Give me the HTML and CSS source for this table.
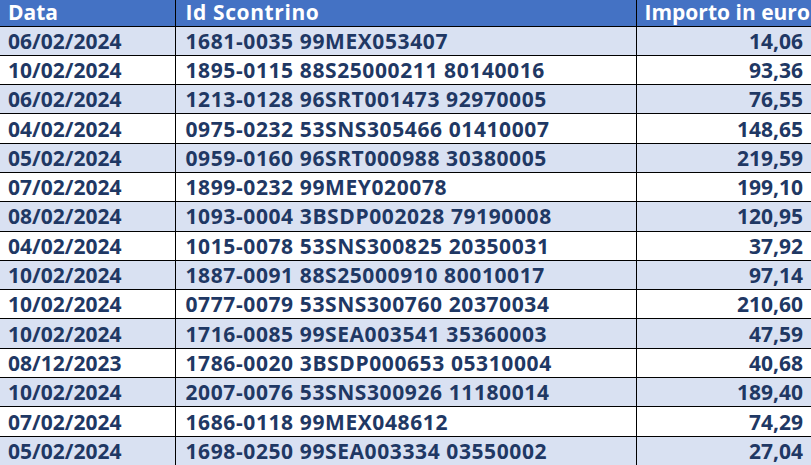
FILE: index.html
```html
<!DOCTYPE html>
<html lang="it">
<head>
<meta charset="utf-8">
<title>Scontrini</title>
<link rel="stylesheet" href="styles.css">
</head>
<body>
<table class="receipts">
  <thead>
    <tr class="head"><th class="c-date">Data</th><th class="c-id">Id Scontrino</th><th class="c-amt">Importo in euro</th></tr>
  </thead>
  <tbody>
    <tr class="alt"><td>06/02/2024</td><td class="id">1681-0035 99MEX053407</td><td class="num">14,06</td></tr>
    <tr><td>10/02/2024</td><td class="id">1895-0115 88S25000211 80140016</td><td class="num">93,36</td></tr>
    <tr class="alt"><td>06/02/2024</td><td class="id">1213-0128 96SRT001473 92970005</td><td class="num">76,55</td></tr>
    <tr><td>04/02/2024</td><td class="id">0975-0232 53SNS305466 01410007</td><td class="num">148,65</td></tr>
    <tr class="alt"><td>05/02/2024</td><td class="id">0959-0160 96SRT000988 30380005</td><td class="num">219,59</td></tr>
    <tr><td>07/02/2024</td><td class="id">1899-0232 99MEY020078</td><td class="num">199,10</td></tr>
    <tr class="alt"><td>08/02/2024</td><td class="id">1093-0004 3BSDP002028 79190008</td><td class="num">120,95</td></tr>
    <tr><td>04/02/2024</td><td class="id">1015-0078 53SNS300825 20350031</td><td class="num">37,92</td></tr>
    <tr class="alt"><td>10/02/2024</td><td class="id">1887-0091 88S25000910 80010017</td><td class="num">97,14</td></tr>
    <tr><td>10/02/2024</td><td class="id">0777-0079 53SNS300760 20370034</td><td class="num">210,60</td></tr>
    <tr class="alt"><td>10/02/2024</td><td class="id">1716-0085 99SEA003541 35360003</td><td class="num">47,59</td></tr>
    <tr><td>08/12/2023</td><td class="id">1786-0020 3BSDP000653 05310004</td><td class="num">40,68</td></tr>
    <tr class="alt"><td>10/02/2024</td><td class="id">2007-0076 53SNS300926 11180014</td><td class="num">189,40</td></tr>
    <tr><td>07/02/2024</td><td class="id">1686-0118 99MEX048612</td><td class="num">74,29</td></tr>
    <tr class="alt"><td>05/02/2024</td><td class="id">1698-0250 99SEA003334 03550002</td><td class="num">27,04</td></tr>
  </tbody>
</table>
</body>
</html>
```

FILE: styles.css
```css
html, body {
  margin: 0;
  padding: 0;
  background: #ffffff;
}

.receipts {
  width: 811px;
  border-collapse: collapse;
  table-layout: fixed;
  font-family: "Open Sans", "Liberation Sans", sans-serif;
  font-weight: 700;
  font-size: 21px;
  color: #1f3864;
}

.receipts th,
.receipts td {
  box-sizing: border-box;
  padding: 0 8px;
  white-space: nowrap;
}

.c-date { width: 175px; }
.c-id { width: 461px; }
.c-amt { width: 175px; }

.head th {
  background: #4472c4;
  color: #ffffff;
  height: 26px;
  padding-top: 0;
  padding-bottom: 0;
  text-align: left;
  line-height: 25px;
  vertical-align: top;
  border-bottom: 1px solid #000;
  border-right: 1px solid #000;
}

.head th:last-child {
  border-right: none;
  text-align: right;
}

.receipts td {
  height: 29.3px;
  line-height: 28px;
  border-bottom: 1px solid #000;
  border-right: 1px solid #000;
}

.receipts td:last-child {
  border-right: none;
}

.receipts td.id,
.head th.c-id {
  padding-left: 10px;
  letter-spacing: 0.6px;
}

.receipts tr.alt td {
  background: #d9e1f2;
}

.receipts td.num {
  text-align: right;
}
```
